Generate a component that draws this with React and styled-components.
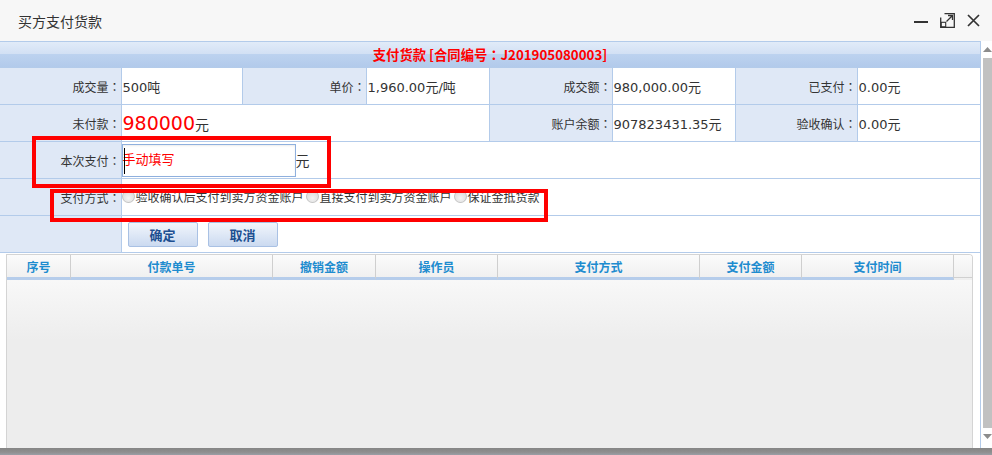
import React from 'react';
import styled, { createGlobalStyle } from 'styled-components';

const GlobalStyle = createGlobalStyle`
  html, body {
    margin: 0;
    padding: 0;
    background: #fff;
    overflow: hidden;
  }
  body {
    font-family: "DejaVu Sans", "Noto Sans CJK SC", sans-serif;
    font-size: 12px;
    color: #333;
  }
`;

const Window = styled.div`
  position: relative;
  width: 992px;
  height: 455px;
  display: flex;
  flex-direction: column;
  overflow: hidden;
`;

const TitleBar = styled.div`
  height: 41px;
  flex: none;
  display: flex;
  align-items: center;
  justify-content: space-between;
  padding: 0 12px 0 18px;
  background: #f7f7f7;
  font-family: "Noto Sans CJK SC", sans-serif;
  font-size: 14px;
  color: #333;
`;

const WinButtons = styled.div`
  display: flex;
  align-items: center;
  gap: 12px;
`;

const Body = styled.div`
  flex: 1;
  display: flex;
  min-height: 0;
`;

const Main = styled.div`
  width: 980px;
  flex: none;
  display: flex;
  flex-direction: column;
  border-top: 1px solid #b3cbea;
  border-right: 1px solid #b3cbea;
`;

const VScroll = styled.div`
  flex: 1;
  display: flex;
  flex-direction: column;
  align-items: center;
  padding-left: 2px;
`;

const ArrowBox = styled.div`
  height: 17px;
  width: 100%;
  display: flex;
  align-items: center;
  justify-content: center;
`;

const Thumb = styled.div`
  width: 100%;
  height: 370px;
  background: #c1c1c1;
`;

const HScroll = styled.div`
  height: 7px;
  flex: none;
  background: linear-gradient(#858585, #8f8f8f 60%, #9a9ea6);
`;

const FormTable = styled.table`
  width: 980px;
  table-layout: fixed;
  border-collapse: collapse;
`;

const Caption = styled.th`
  height: 25px;
  padding: 0;
  border-bottom: 1px solid #b3cbea;
  background: linear-gradient(#e1ebf8 0%, #d2e0f4 48%, #bcd2ef 50%, #b2caeb 100%);
  color: #f00;
  font-family: "Noto Sans CJK SC", sans-serif;
  font-size: 13.3px;
  font-weight: bold;
  text-align: center;
`;

const Colon = styled.span`
  font-family: "Noto Sans CJK TC", sans-serif;
`;

const Label = styled.td`
  height: 36px;
  padding: 0;
  border: 1px solid #b3cbea;
  border-left: none;
  background: #dfe8f6;
  text-align: right;
  white-space: nowrap;
  font-family: "Noto Sans CJK SC", sans-serif;
  font-size: 12px;
  &:not(:empty)::after {
    content: '：';
    font-family: "Noto Sans CJK TC", sans-serif;
  }
`;

const Value = styled.td`
  height: 36px;
  padding: 0 0 0 ${p => (p.$flush ? 0 : 1)}px;
  border: 1px solid #b3cbea;
  background: #fff;
  white-space: nowrap;
  font-size: ${p => (p.$small ? 12 : 13)}px;
`;

const Big = styled.span`
  font-size: 19px;
  color: #f00;
`;

const Unit = styled.span`
  font-size: 14px;
`;

const InputRow = styled.div`
  display: flex;
  align-items: center;
`;

const InputBox = styled.div`
  position: relative;
  width: 174px;
  height: 33px;
  box-sizing: border-box;
  border: 1px solid #8fb0de;
  box-shadow: inset 0 1px 2px rgba(0, 0, 0, 0.08);
  display: flex;
  align-items: center;
  padding-bottom: 4px;
  color: #f00;
  font-family: "Noto Sans CJK SC", sans-serif;
  font-size: 13px;
  &::before {
    content: '';
    position: absolute;
    left: 1px;
    top: 3px;
    width: 1px;
    height: 26px;
    background: #000;
  }
`;

const Radios = styled.div`
  display: flex;
  align-items: center;
  font-family: "Noto Sans CJK SC", sans-serif;
  font-size: 12px;
  padding-bottom: 1px;
`;

const Radio = styled.span`
  display: inline-block;
  width: 11px;
  height: 11px;
  margin-right: 1px;
  border-radius: 50%;
  border: 1px solid #c4c4c4;
  border-top-color: #a9a9a9;
  background: radial-gradient(circle at 50% 65%, #f4f4f4, #d6d6d6);
`;

const RadioText = styled.span`
  margin-right: 2px;
`;

const Buttons = styled.div`
  display: flex;
  gap: 10px;
  padding-left: 5px;
`;

const Button = styled.button`
  width: 70px;
  height: 25px;
  padding: 0;
  border: 1px solid #a9c1e4;
  border-radius: 2px;
  background: linear-gradient(#f2f6fc, #cbdaf0);
  color: #1d4f91;
  font-family: "Noto Sans CJK SC", sans-serif;
  font-size: 13px;
  font-weight: bold;
`;

const GridPanel = styled.div`
  flex: 1;
  margin: 1px 7px 0 6px;
  display: flex;
  flex-direction: column;
  border: 1px solid #d4d4d4;
  border-bottom: none;
  border-top-right-radius: 4px;
  overflow: hidden;
`;

const GridHead = styled.div`
  display: grid;
  grid-template-columns: 64px 202px 103px 122px 202px 102px 152px 1fr;
  background: linear-gradient(#fbfbfb, #efefef);
`;

const HeadCell = styled.div`
  height: 22px;
  display: flex;
  align-items: center;
  justify-content: center;
  border-right: ${p => (p.$last ? 'none' : '1px solid #cfcfcf')};
  border-bottom: ${p => (p.$last ? '1px solid #d0d0d0' : '3px solid #b6cdeb')};
  margin-bottom: ${p => (p.$last ? 2 : 0)}px;
  color: #1e8ccf;
  font-family: "Noto Sans CJK SC", sans-serif;
  font-size: 12px;
  font-weight: bold;
`;

const GridBody = styled.div`
  flex: 1;
  background: linear-gradient(#f8f8f8, #ededed 60px, #ededed);
`;

const Mark = styled.div`
  position: absolute;
  left: ${p => p.$x}px;
  top: ${p => p.$y}px;
  width: ${p => p.$w}px;
  height: ${p => p.$h}px;
  box-sizing: border-box;
  border: 4px solid #f00;
  pointer-events: none;
`;

const MinIcon = () => (
  <svg width="14" height="14" viewBox="0 0 14 14">
    <path d="M0 8H14" stroke="#333" strokeWidth="2" />
  </svg>
);

const MaxIcon = () => (
  <svg width="15" height="15" viewBox="0 0 15 15" fill="none" stroke="#333" strokeWidth="1.3">
    <path d="M4.5 0.7H14.3V14.3H0.7V4.5" />
    <rect x="1.2" y="9.3" width="4.5" height="4.5" strokeWidth="1.1" />
    <path d="M6.5 8.5L12.5 2.5M8 2.5H12.5V7" />
  </svg>
);

const CloseIcon = () => (
  <svg width="13" height="13" viewBox="0 0 13 13">
    <path d="M1 1L12 12M12 1L1 12" stroke="#333" strokeWidth="1.7" />
  </svg>
);

const Tri = ({ up }) => (
  <svg width="9" height="5" viewBox="0 0 9 5">
    <path d={up ? 'M0 5L4.5 0L9 5Z' : 'M0 0L4.5 5L9 0Z'} fill="#8c8c8c" />
  </svg>
);

const columns = [
  { name: '序号' },
  { name: '付款单号' },
  { name: '撤销金额' },
  { name: '操作员' },
  { name: '支付方式' },
  { name: '支付金额' },
  { name: '支付时间' },
  { name: '', last: true },
];

const payWays = ['验收确认后支付到卖方资金账户', '直接支付到卖方资金账户', '保证金抵货款'];

export default function App() {
  return (
    <Window>
      <GlobalStyle />
      <TitleBar>
        <span>买方支付货款</span>
        <WinButtons>
          <MinIcon />
          <MaxIcon />
          <CloseIcon />
        </WinButtons>
      </TitleBar>
      <Body>
        <Main>
          <FormTable>
            <colgroup>
              <col style={{ width: 121 }} />
              <col style={{ width: 121 }} />
              <col style={{ width: 124 }} />
              <col style={{ width: 123 }} />
              <col style={{ width: 123 }} />
              <col style={{ width: 123 }} />
              <col style={{ width: 122 }} />
              <col style={{ width: 123 }} />
            </colgroup>
            <thead>
              <tr>
                <Caption colSpan={8}>
                  支付货款 [合同编号<Colon>：</Colon>J201905080003]
                </Caption>
              </tr>
            </thead>
            <tbody>
              <tr>
                <Label>成交量</Label>
                <Value>500吨</Value>
                <Label>单价</Label>
                <Value>1,960.00元/吨</Value>
                <Label>成交额</Label>
                <Value>980,000.00元</Value>
                <Label>已支付</Label>
                <Value>0.00元</Value>
              </tr>
              <tr>
                <Label>未付款</Label>
                <Value colSpan={3}>
                  <Big>980000</Big>
                  <Unit>元</Unit>
                </Value>
                <Label>账户余额</Label>
                <Value>907823431.35元</Value>
                <Label>验收确认</Label>
                <Value>0.00元</Value>
              </tr>
              <tr>
                <Label>本次支付</Label>
                <Value colSpan={7} $flush>
                  <InputRow>
                    <InputBox>手动填写</InputBox>
                    <Unit>元</Unit>
                  </InputRow>
                </Value>
              </tr>
              <tr>
                <Label>支付方式</Label>
                <Value colSpan={7} $flush $small>
                  <Radios>
                    {payWays.map(w => (
                      <React.Fragment key={w}>
                        <Radio />
                        <RadioText>{w}</RadioText>
                      </React.Fragment>
                    ))}
                  </Radios>
                </Value>
              </tr>
              <tr>
                <Label />
                <Value colSpan={7}>
                  <Buttons>
                    <Button>确定</Button>
                    <Button>取消</Button>
                  </Buttons>
                </Value>
              </tr>
            </tbody>
          </FormTable>
          <GridPanel>
            <GridHead>
              {columns.map((c, i) => (
                <HeadCell key={i} $last={c.last}>{c.name}</HeadCell>
              ))}
            </GridHead>
            <GridBody />
          </GridPanel>
        </Main>
        <VScroll>
          <ArrowBox><Tri up /></ArrowBox>
          <Thumb />
          <ArrowBox><Tri /></ArrowBox>
        </VScroll>
      </Body>
      <HScroll />
      <Mark $x={32} $y={136} $w={299} $h={52} />
      <Mark $x={50} $y={189} $w={498} $h={33} />
    </Window>
  );
}
